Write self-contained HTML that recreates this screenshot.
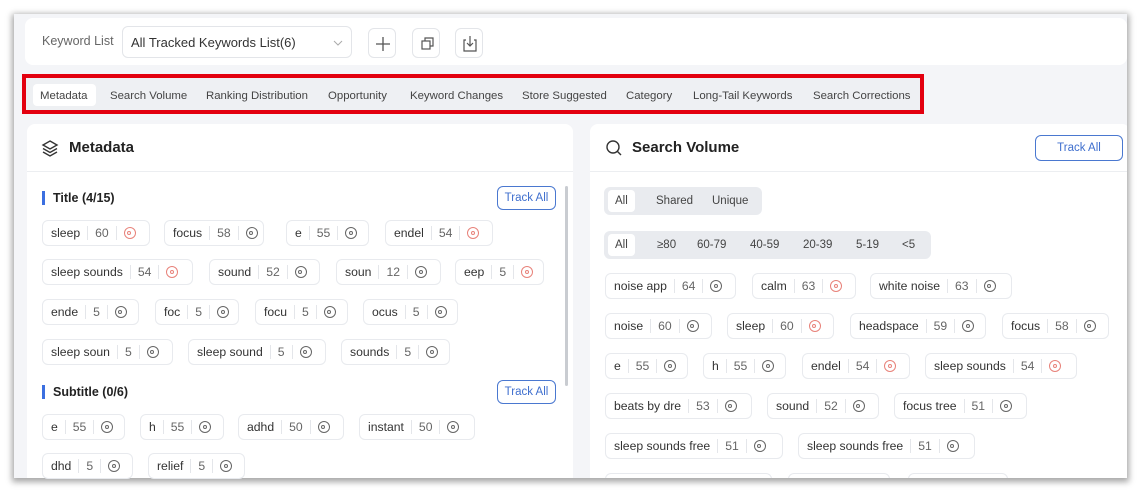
<!DOCTYPE html>
<html><head><meta charset="utf-8"><style>
*{box-sizing:border-box;margin:0;padding:0}
html,body{width:1140px;height:493px;overflow:hidden}
body{background:#fff;font-family:"Liberation Sans",sans-serif;position:relative;color:#333}
.win{position:absolute;left:14px;top:14px;width:1113px;height:464px;background:#f4f5f8;box-shadow:0 2px 6px 2px rgba(0,0,0,.35);overflow:hidden}
.a{position:absolute}
.top{left:11px;top:4px;width:1102px;height:47px;background:#fff;border-radius:8px}
.btn{position:absolute;top:10px;width:28px;height:30px;border:1px solid #e3e5e9;border-radius:6px;background:#fff}
.tabs{left:8px;top:60px;width:902px;height:40px;border:4px solid #e3000f;background:#eef0f3}
.tab{position:absolute;top:9px;font-size:11.4px;color:#444;line-height:18px;white-space:nowrap}
.card{background:#fff;border-radius:8px}
.chip{position:absolute;height:26px;border:1px solid #e8eaee;border-radius:6px;background:#fff;display:flex;align-items:center;padding-left:8px;font-size:12.2px;color:#333;white-space:nowrap;overflow:hidden}
.chip .n{color:#666;border-left:1px solid #e4e6ea;border-right:1px solid #e4e6ea;padding:0 7px;margin:0 7px;line-height:14px}
.ic{width:12px;height:12px;border:1.5px solid #666;border-radius:50%;position:relative;flex-shrink:0}
.ic:after{content:"";position:absolute;left:2.5px;top:2.5px;width:4px;height:4px;border:1px solid #666;border-radius:50%;box-sizing:border-box}
.r .ic,.r .ic:after{border-color:#e8827a}
.ta{position:absolute;height:24px;border:1px solid #4a78d0;border-radius:6px;color:#3f6fce;font-size:11.5px;text-align:center;line-height:22px}
.h{position:absolute;font-size:12.5px;font-weight:bold;color:#222;border-left:3px solid #3b6fe0;padding-left:8px;line-height:14px}
.seg{position:absolute;background:#e9ebef;border-radius:6px;height:28px}
.seg span{position:absolute;top:3px;height:22px;line-height:22px;font-size:11.5px;color:#444;padding:0 7px}
.seg .on{background:#fff;border-radius:4px}
</style></head><body>
<div class="win">
 <div class="a top">
  <div class="a" style="left:17px;top:16px;font-size:12.5px;color:#666">Keyword List</div>
  <div class="a" style="left:97px;top:8px;width:230px;height:32px;border:1px solid #e3e5e9;border-radius:6px"><span class="a" style="left:8px;top:8px;font-size:13px;color:#333">All Tracked Keywords List(6)</span><svg class="a" style="right:8px;top:12px" width="10" height="8"><path d="M1 2l4 4 4-4" fill="none" stroke="#aaa" stroke-width="1"/></svg></div>
  <div class="btn" style="left:343px"><svg width="28" height="30"><path d="M14 8v14M7 15h14" stroke="#555" stroke-width="1.3"/></svg></div>
  <div class="btn" style="left:387px"><svg width="28" height="30"><rect x="9" y="12" width="8" height="8" fill="none" stroke="#555" stroke-width="1.2"/><path d="M12 12V9h8v8h-3" fill="none" stroke="#555" stroke-width="1.2"/></svg></div>
  <div class="btn" style="left:430px"><svg width="28" height="30"><path d="M10 11H8v11h12V11h-2M14 7v10M11 14l3 3 3-3" fill="none" stroke="#555" stroke-width="1.2"/></svg></div>
 </div>
 <div class="a tabs">
  <div class="a" style="left:7px;top:6px;width:63px;height:22px;background:#fff;border-radius:4px"></div>
  <span class="tab" style="left:14px">Metadata</span>
  <span class="tab" style="left:84px">Search Volume</span>
  <span class="tab" style="left:180px">Ranking Distribution</span>
  <span class="tab" style="left:302px">Opportunity</span>
  <span class="tab" style="left:384px">Keyword Changes</span>
  <span class="tab" style="left:496px">Store Suggested</span>
  <span class="tab" style="left:600px">Category</span>
  <span class="tab" style="left:667px">Long-Tail Keywords</span>
  <span class="tab" style="left:787px">Search Corrections</span>
 </div>
 <div class="a card" style="left:13px;top:110px;width:546px;height:370px">
  <div class="a" style="left:0;top:47px;width:546px;height:1px;background:#eceef1"></div>
  <svg class="a" style="left:14px;top:15px" width="18" height="18"><path d="M9 2l7 4-7 4-7-4z M2 9.5l7 4 7-4 M2 13l7 4 7-4" fill="none" stroke="#333" stroke-width="1.4"/></svg>
  <div class="a" style="left:42px;top:15px;font-size:15px;font-weight:bold;color:#222">Metadata</div>
  <div class="a" style="left:538px;top:62px;width:3px;height:200px;background:#c9ccd1;border-radius:2px"></div>
 </div>
 <div class="a card" style="left:576px;top:110px;width:540px;height:370px">
  <div class="a" style="left:0;top:47px;width:540px;height:1px;background:#eceef1"></div>
  <svg class="a" style="left:15px;top:15px" width="18" height="18"><circle cx="8" cy="8" r="6" fill="none" stroke="#333" stroke-width="1.4"/><path d="M12 12l4 4" stroke="#333" stroke-width="1.4"/></svg>
  <div class="a" style="left:42px;top:15px;font-size:15px;font-weight:bold;color:#222">Search Volume</div>
  <div class="a" style="left:15px;top:349px;width:167px;height:20px;border:1px solid #e8eaee;border-radius:6px"></div>
  <div class="a" style="left:198px;top:349px;width:102px;height:20px;border:1px solid #e8eaee;border-radius:6px"></div>
  <div class="a" style="left:318px;top:349px;width:100px;height:20px;border:1px solid #e8eaee;border-radius:6px"></div>
 </div>
</div>
<div class="ta" style="left:1035px;top:135px;width:88px;height:26px;line-height:24px">Track All</div>
<div class="h" style="left:42px;top:191px">Title (4/15)</div>
<div class="ta" style="left:497px;top:186px;width:59px">Track All</div>
<div class="h" style="left:42px;top:385px">Subtitle (0/6)</div>
<div class="ta" style="left:497px;top:380px;width:59px">Track All</div>
<div class="seg" style="left:604px;top:187px;width:158px"><span class="on" style="left:4px">All</span><span style="left:45px">Shared</span><span style="left:101px">Unique</span></div>
<div class="seg" style="left:604px;top:231px;width:327px"><span class="on" style="left:4px">All</span><span style="left:46px">≥80</span><span style="left:86px">60-79</span><span style="left:139px">40-59</span><span style="left:192px">20-39</span><span style="left:245px">5-19</span><span style="left:291px">&lt;5</span></div>

<div class="chip r" style="left:42px;top:220px;width:108px">sleep<span class="n">60</span><i class="ic"></i></div>
<div class="chip" style="left:164px;top:220px;width:100px">focus<span class="n">58</span><i class="ic"></i></div>
<div class="chip" style="left:286px;top:220px;width:83px">e<span class="n">55</span><i class="ic"></i></div>
<div class="chip r" style="left:385px;top:220px;width:108px">endel<span class="n">54</span><i class="ic"></i></div>
<div class="chip r" style="left:42px;top:259px;width:151px">sleep sounds<span class="n">54</span><i class="ic"></i></div>
<div class="chip" style="left:209px;top:259px;width:111px">sound<span class="n">52</span><i class="ic"></i></div>
<div class="chip" style="left:336px;top:259px;width:105px">soun<span class="n">12</span><i class="ic"></i></div>
<div class="chip r" style="left:455px;top:259px;width:89px">eep<span class="n">5</span><i class="ic"></i></div>
<div class="chip" style="left:42px;top:299px;width:97px">ende<span class="n">5</span><i class="ic"></i></div>
<div class="chip" style="left:155px;top:299px;width:84px">foc<span class="n">5</span><i class="ic"></i></div>
<div class="chip" style="left:255px;top:299px;width:93px">focu<span class="n">5</span><i class="ic"></i></div>
<div class="chip" style="left:363px;top:299px;width:95px">ocus<span class="n">5</span><i class="ic"></i></div>
<div class="chip" style="left:42px;top:339px;width:131px">sleep soun<span class="n">5</span><i class="ic"></i></div>
<div class="chip" style="left:188px;top:339px;width:138px">sleep sound<span class="n">5</span><i class="ic"></i></div>
<div class="chip" style="left:341px;top:339px;width:109px">sounds<span class="n">5</span><i class="ic"></i></div>
<div class="chip" style="left:42px;top:414px;width:83px">e<span class="n">55</span><i class="ic"></i></div>
<div class="chip" style="left:140px;top:414px;width:84px">h<span class="n">55</span><i class="ic"></i></div>
<div class="chip" style="left:238px;top:414px;width:106px">adhd<span class="n">50</span><i class="ic"></i></div>
<div class="chip" style="left:359px;top:414px;width:116px">instant<span class="n">50</span><i class="ic"></i></div>
<div class="chip" style="left:42px;top:453px;width:91px">dhd<span class="n">5</span><i class="ic"></i></div>
<div class="chip" style="left:148px;top:453px;width:97px">relief<span class="n">5</span><i class="ic"></i></div>

<div class="chip" style="left:605px;top:273px;width:131px">noise app<span class="n">64</span><i class="ic"></i></div>
<div class="chip r" style="left:752px;top:273px;width:104px">calm<span class="n">63</span><i class="ic"></i></div>
<div class="chip" style="left:870px;top:273px;width:142px">white noise<span class="n">63</span><i class="ic"></i></div>
<div class="chip" style="left:605px;top:313px;width:107px">noise<span class="n">60</span><i class="ic"></i></div>
<div class="chip r" style="left:727px;top:313px;width:107px">sleep<span class="n">60</span><i class="ic"></i></div>
<div class="chip" style="left:850px;top:313px;width:136px">headspace<span class="n">59</span><i class="ic"></i></div>
<div class="chip" style="left:1002px;top:313px;width:107px">focus<span class="n">58</span><i class="ic"></i></div>
<div class="chip" style="left:605px;top:353px;width:83px">e<span class="n">55</span><i class="ic"></i></div>
<div class="chip" style="left:703px;top:353px;width:83px">h<span class="n">55</span><i class="ic"></i></div>
<div class="chip r" style="left:802px;top:353px;width:108px">endel<span class="n">54</span><i class="ic"></i></div>
<div class="chip r" style="left:925px;top:353px;width:152px">sleep sounds<span class="n">54</span><i class="ic"></i></div>
<div class="chip" style="left:605px;top:393px;width:147px">beats by dre<span class="n">53</span><i class="ic"></i></div>
<div class="chip" style="left:767px;top:393px;width:112px">sound<span class="n">52</span><i class="ic"></i></div>
<div class="chip" style="left:894px;top:393px;width:133px">focus tree<span class="n">51</span><i class="ic"></i></div>
<div class="chip" style="left:605px;top:433px;width:178px">sleep sounds free<span class="n">51</span><i class="ic"></i></div>
<div class="chip" style="left:798px;top:433px;width:177px">sleep sounds free<span class="n">51</span><i class="ic"></i></div>
</body></html>
